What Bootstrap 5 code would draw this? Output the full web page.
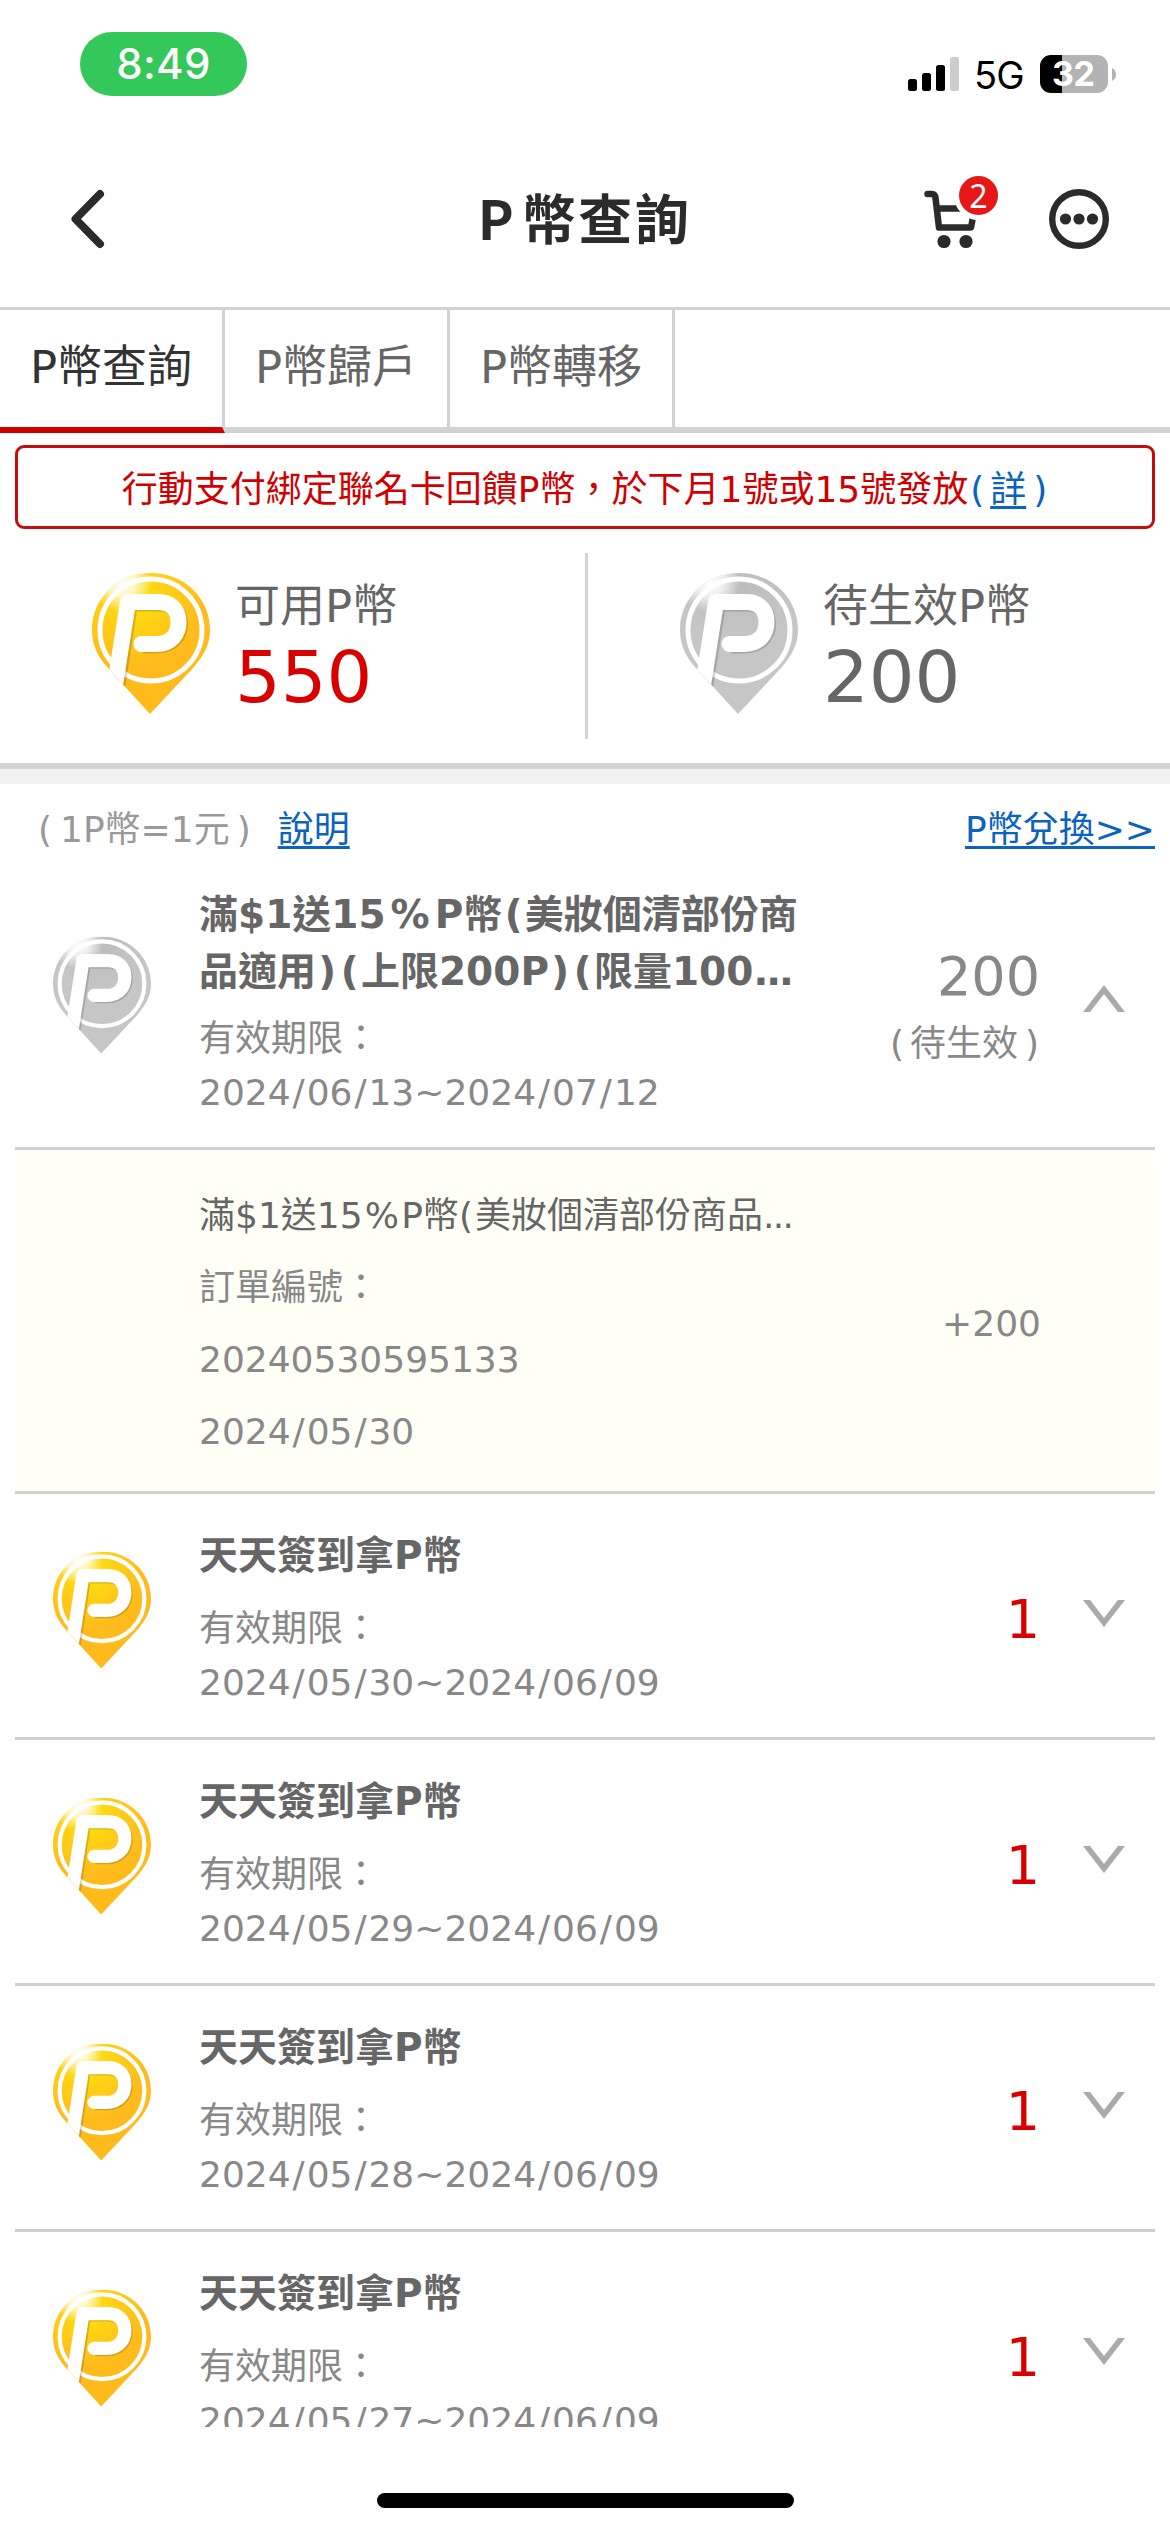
<!DOCTYPE html>
<html lang="zh-Hant">
<head>
<meta charset="utf-8">
<meta name="viewport" content="width=device-width, initial-scale=1">
<title>P幣查詢</title>
<link rel="stylesheet" href="https://cdn.jsdelivr.net/npm/bootstrap@5.3.0/dist/css/bootstrap.min.css">
<style>
body{font-family:"DejaVu Sans","Noto Sans CJK TC",sans-serif;font-size:36px;line-height:54px;color:#888;background:#fff}
.screen{width:1170px;height:2532px}
svg{display:block;flex:none}
.statusbar{height:128px;padding:32px 54px 0 80px;font-family:Inter,sans-serif;color:#000}
.clock{width:167px;height:64px;background:#34c759;font-size:42px;line-height:63px;font-weight:500;letter-spacing:.3px;padding-right:0}
.net{font-size:38px;line-height:38px;margin-left:15px;letter-spacing:-.8px;width:66px;padding-top:1px}
.battery{width:68px;height:38px;border-radius:11px;background:linear-gradient(90deg,#000 22px,#b3b3b3 22px);font-size:34px;line-height:37px;font-weight:700;letter-spacing:-.5px;padding-left:12px}
.signals{margin-top:23px;height:38px}
.appbar{height:179px;padding:2px 61px 0 68px}
.appbar h1{font-family:"Noto Sans CJK TC",sans-serif;font-size:54px;line-height:80px;font-weight:700;letter-spacing:2.5px;color:#2b2b2b;padding-right:11px;padding-bottom:4px}
.appbar h1 span{letter-spacing:8px}
.cart-count{left:31px;top:-13px;width:39px;height:39px;background:#e81717;box-shadow:0 0 0 5px #fff;font:400 32px/39px "Noto Sans",sans-serif}
.tabs{border-top:3px solid #d2d2d2;height:126px}
.tabs .nav-link{width:225px;border:0 solid #d2d2d2;border-right-width:3px;border-bottom-width:6px;border-radius:0;padding:0 0 2px;font-size:45px;line-height:115px;color:#666}
.tabs .nav-link.active{color:#333;border-bottom-color:#d00000}
.tabs .rest{border-bottom:6px solid #d2d2d2}
.notice{margin:12px 15px 0;height:84px;border:3px solid #c40d10;border-radius:9px;color:#d00000;line-height:76px;padding-top:4px}
.lnk{color:#0b63be}
.pl,.pr{display:inline-block;width:22px;text-align:left;padding-left:2px}
.pr{text-align:right;padding:0 1px 0 0}
.totals{height:240px;padding-top:24px;border-bottom:6px solid #d2d2d2}
.total-cell{height:186px;padding:20px 0 0 92px}
.total-cell svg{width:118px;height:141px}
.total-cell + .total-cell{border-left:3px solid #d2d2d2}
.total-text{margin-left:25px;color:#666}
.total-text .lbl{font-size:45px;line-height:68px}
.total-text .num{font-size:72px;line-height:72px}
.red{color:#d90000}
.gap-band{height:15px;background:#f1f1f1}
.info{height:69px;padding:23px 15px 0 36px;line-height:46px;color:#999}
.info .lnk,.notice u{text-underline-offset:4px;text-decoration-thickness:3px}
.info .unit{margin-right:18px}
.info .unit .pl{width:24px}
.info .unit .pr{width:22px}
.records{margin:0 15px}
.rec{border-bottom:3px solid #d0d0d0}
.rec-icon{width:184px;padding-left:38px}
.rec-icon svg{width:98px;height:118px;margin-bottom:11px}
.rec-body{width:612px;padding:33px 0 27px}
.rec-title{font-size:39px;line-height:57px;font-weight:700;color:#666;margin:0 0 18px}
.rec-title.two{margin-bottom:12px}
.rec-amt{width:229px;padding-top:7px}
.rec-amt .num{font-size:54px;line-height:81px}
.chev{width:42px;height:27px;margin:0 30px 4px 43px}
.detail{background:#fffff6;padding:30px 114px 23px 184px;line-height:72px}
.detail .ttl{color:#666}
.sl{margin:0 .054em}
.pc{margin:0 .06em}.op{margin-right:.06em}
.rec-title .pc{margin:0 .13em}.rec-title .op{margin:0 .06em}
.dots{letter-spacing:-.05em}
.viewport-list{height:1643px}
.home{width:417px;height:15px;border-radius:8px;background:#000;margin:66px auto 0}
</style>
<script src="https://cdn.jsdelivr.net/npm/bootstrap@5.3.0/dist/js/bootstrap.bundle.min.js"></script>
</head>
<body>
<svg width="0" height="0" class="position-absolute" aria-hidden="true">
  <defs>
    <radialGradient id="gold" gradientUnits="userSpaceOnUse" cx="42" cy="24" r="70"><stop offset="0" stop-color="#ffe60f"/><stop offset=".45" stop-color="#ffd015"/><stop offset="1" stop-color="#ffbb1c"/></radialGradient>
    <radialGradient id="silver" gradientUnits="userSpaceOnUse" cx="62" cy="14" r="60"><stop offset="0" stop-color="#bdbdbd"/><stop offset="1" stop-color="#c6c6c6"/></radialGradient>
    <radialGradient id="shine" gradientUnits="userSpaceOnUse" cx="30" cy="9" r="30"><stop offset="0" stop-color="#fff"/><stop offset=".45" stop-color="#fff" stop-opacity=".75"/><stop offset="1" stop-color="#fff" stop-opacity="0"/></radialGradient>
    <clipPath id="pinclip"><path d="M58 141 L16 95 C5 83 0 71 0 57 C0 25 26 0 59 0 C92 0 118 25 118 57 C118 71 112 82 102 94 Z"/></clipPath>
    <g id="pinmark" clip-path="url(#pinclip)" fill="none">
      <circle cx="59" cy="57" r="51" stroke="#fff" stroke-width="5"/>
      <rect x="-4" y="-4" width="70" height="60" fill="url(#shine)"/>
      <path d="M51 72.500 H65 C81 72.500 88 62 88 51 C88 38 79 30.500 67 30.500 H38 L25.500 112" stroke="#000" stroke-opacity=".16" stroke-width="16" stroke-linejoin="round"/>
      <path d="M49 71 H64 C80 71 86.500 60 86.500 49 C86.500 36 78 29 66 29 H36 L23 112" stroke="#fff" stroke-width="16" stroke-linejoin="round"/>
      <circle cx="49.500" cy="71" r="8" fill="#fff"/>
    </g>
    <symbol id="pin-gold" viewBox="0 0 118 141"><rect width="118" height="141" fill="url(#gold)" clip-path="url(#pinclip)"/><use href="#pinmark"/></symbol>
    <symbol id="pin-silver" viewBox="0 0 118 141"><rect width="118" height="141" fill="url(#silver)" clip-path="url(#pinclip)"/><use href="#pinmark"/></symbol>
    <symbol id="down" viewBox="0 0 42 27"><path d="M0 0H7L21 18L35 0H42L21 27Z" fill="#aaa"/></symbol>
    <symbol id="up" viewBox="0 0 42 27"><path d="M0 27H7L21 9L35 27H42L21 0Z" fill="#aaa"/></symbol>
  </defs>
</svg>

<main class="screen overflow-hidden d-flex flex-column">
  <div class="statusbar d-flex justify-content-between align-items-start">
    <div class="clock rounded-pill text-white text-center">8:49</div>
    <div class="signals d-flex align-items-center">
      <svg width="51" height="34" viewBox="0 0 51 34"><rect y="22" width="9" height="12" rx="2.500"/><rect x="14" y="16" width="9" height="18" rx="2.500"/><rect x="28" y="8" width="9" height="26" rx="2.500"/><rect x="42" width="9" height="34" rx="2.500" fill="#ccc"/></svg>
      <span class="net">5G</span>
      <span class="battery text-white">32</span>
      <svg class="ms-1" width="4" height="13" viewBox="0 0 4 13"><path d="M0 0Q4 2 4 6.500T0 13Z" fill="#b3b3b3"/></svg>
    </div>
  </div>

  <header class="appbar d-flex align-items-center justify-content-between">
    <svg width="140" height="62" viewBox="0 0 140 62" fill="none" stroke="#2b2b2b" stroke-width="8" stroke-linecap="round" stroke-linejoin="round"><path d="M32 6L7.500 31L32 56"/></svg>
    <h1 class="mb-0 ms-5"><span>P</span>幣查詢</h1>
    <div class="d-flex align-items-center">
      <div class="position-relative me-5">
        <svg width="53" height="60" viewBox="0 0 53 60" fill="none" stroke="#2b2b2b" stroke-width="6.500" stroke-linecap="round" stroke-linejoin="round"><path d="M3.500 5H8Q11 5 11.500 9L15 38.500H47L49 28"/><path d="M14 19.500H38"/><g fill="#2b2b2b" stroke="none"><circle cx="20" cy="52.500" r="6.600"/><circle cx="42" cy="52.500" r="6.600"/></g></svg>
        <span class="cart-count position-absolute rounded-circle text-white text-center ms-1">2</span>
      </div>
      <svg class="ms-4" width="60" height="60" viewBox="0 0 60 60"><circle cx="30" cy="30" r="26.800" fill="none" stroke="#2b2b2b" stroke-width="6.400"/><g fill="#2b2b2b"><circle cx="16.500" cy="30" r="5.600"/><circle cx="30" cy="30" r="5.600"/><circle cx="43.500" cy="30" r="5.600"/></g></svg>
    </div>
  </header>

  <nav class="tabs nav flex-nowrap">
    <a class="nav-link active text-center" href="#">P幣查詢</a>
    <a class="nav-link text-center" href="#">P幣歸戶</a>
    <a class="nav-link text-center" href="#">P幣轉移</a>
    <span class="rest flex-grow-1"></span>
  </nav>

  <div class="notice text-center text-nowrap">行動支付綁定聯名卡回饋P幣，於下月1號或15號發放<span class="lnk"><span class="pl">(</span><u>詳</u><span class="pr">)</span></span></div>

  <section class="totals d-flex">
    <div class="total-cell w-50 d-flex">
      <svg><use href="#pin-gold"/></svg>
      <div class="total-text"><div class="lbl">可用P幣</div><div class="num red">550</div></div>
    </div>
    <div class="total-cell w-50 d-flex">
      <svg><use href="#pin-silver"/></svg>
      <div class="total-text"><div class="lbl">待生效P幣</div><div class="num">200</div></div>
    </div>
  </section>
  <div class="gap-band"></div>

  <div class="viewport-list flex-shrink-0 overflow-hidden">
  <div class="info d-flex">
    <span class="unit"><span class="pl">(</span>1P幣=1元<span class="pr">)</span></span>
    <a class="lnk ms-2" href="#">說明</a>
    <a class="lnk ms-auto" href="#">P幣兌換&gt;&gt;</a>
  </div>
  <section class="records">
    <article class="rec d-flex align-items-center">
      <div class="rec-icon"><svg><use href="#pin-silver"/></svg></div>
      <div class="rec-body text-nowrap">
        <h2 class="rec-title two">滿$1送15<span class="pc">%</span>P幣<span class="op">(</span>美妝個清部份商<br>品適用<span class="op">)</span><span class="op">(</span>上限200P<span class="op">)</span><span class="op">(</span>限量100<span class="dots">...</span></h2>
        <div>有效期限：</div>
        <div>2024<span class="sl">/</span>06<span class="sl">/</span>13~2024<span class="sl">/</span>07<span class="sl">/</span>12</div>
      </div>
      <div class="rec-amt text-end"><div class="num">200</div><div><span class="pl">(</span>待生效<span class="pr">)</span></div></div>
      <svg class="chev"><use href="#up"/></svg>
    </article>
    <article class="rec detail d-flex align-items-center">
      <div class="text-nowrap">
        <div class="ttl">滿$1送15<span class="pc">%</span>P幣<span class="op">(</span>美妝個清部份商品<span class="dots">...</span></div>
        <div>訂單編號：</div>
        <div>20240530595133</div>
        <div>2024<span class="sl">/</span>05<span class="sl">/</span>30</div>
      </div>
      <div class="ms-auto">+200</div>
    </article>
    <article class="rec d-flex align-items-center">
      <div class="rec-icon"><svg><use href="#pin-gold"/></svg></div>
      <div class="rec-body">
        <h2 class="rec-title">天天簽到拿P幣</h2>
        <div>有效期限：</div>
        <div>2024<span class="sl">/</span>05<span class="sl">/</span>30~2024<span class="sl">/</span>06<span class="sl">/</span>09</div>
      </div>
      <div class="rec-amt text-end red"><div class="num">1</div></div>
      <svg class="chev"><use href="#down"/></svg>
    </article>
    <article class="rec d-flex align-items-center">
      <div class="rec-icon"><svg><use href="#pin-gold"/></svg></div>
      <div class="rec-body">
        <h2 class="rec-title">天天簽到拿P幣</h2>
        <div>有效期限：</div>
        <div>2024<span class="sl">/</span>05<span class="sl">/</span>29~2024<span class="sl">/</span>06<span class="sl">/</span>09</div>
      </div>
      <div class="rec-amt text-end red"><div class="num">1</div></div>
      <svg class="chev"><use href="#down"/></svg>
    </article>
    <article class="rec d-flex align-items-center">
      <div class="rec-icon"><svg><use href="#pin-gold"/></svg></div>
      <div class="rec-body">
        <h2 class="rec-title">天天簽到拿P幣</h2>
        <div>有效期限：</div>
        <div>2024<span class="sl">/</span>05<span class="sl">/</span>28~2024<span class="sl">/</span>06<span class="sl">/</span>09</div>
      </div>
      <div class="rec-amt text-end red"><div class="num">1</div></div>
      <svg class="chev"><use href="#down"/></svg>
    </article>
    <article class="rec d-flex align-items-center">
      <div class="rec-icon"><svg><use href="#pin-gold"/></svg></div>
      <div class="rec-body">
        <h2 class="rec-title">天天簽到拿P幣</h2>
        <div>有效期限：</div>
        <div>2024<span class="sl">/</span>05<span class="sl">/</span>27~2024<span class="sl">/</span>06<span class="sl">/</span>09</div>
      </div>
      <div class="rec-amt text-end red"><div class="num">1</div></div>
      <svg class="chev"><use href="#down"/></svg>
    </article>
  </section>
  </div>
  <div class="home flex-shrink-0"></div>
</main>
</body>
</html>
